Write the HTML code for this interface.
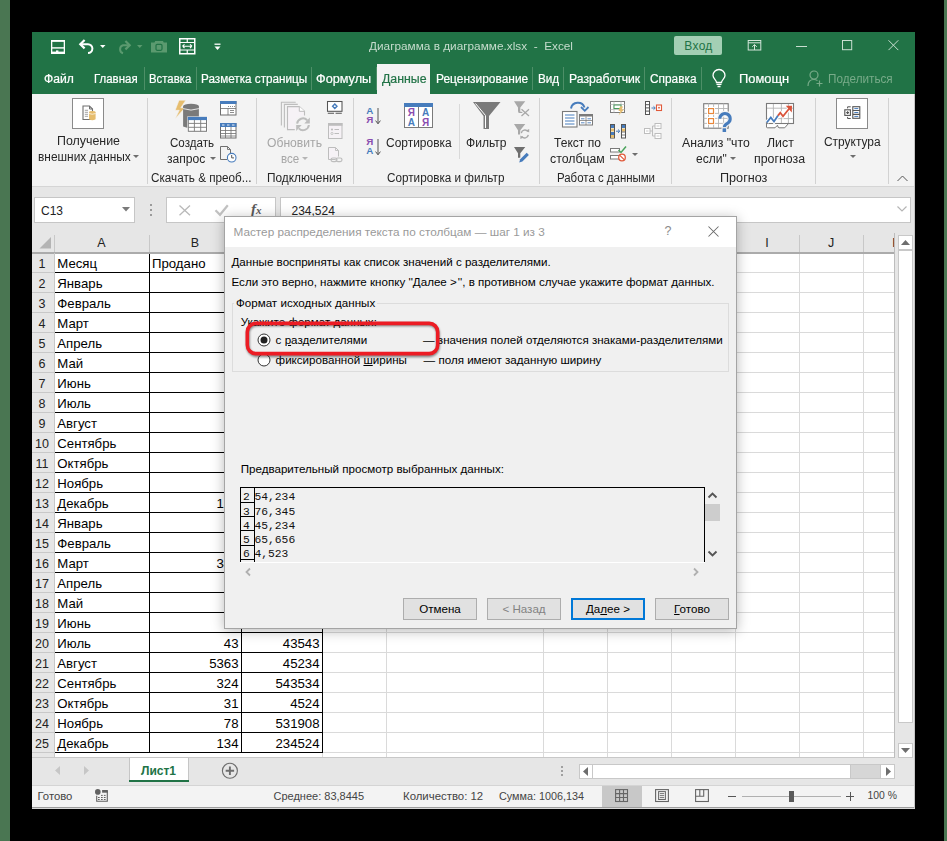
<!DOCTYPE html>
<html><head><meta charset="utf-8"><style>
html,body{margin:0;padding:0;background:#000;}
#root{position:relative;width:947px;height:841px;overflow:hidden;background:#000;font-family:"Liberation Sans", sans-serif;}
#root div{position:absolute;}
#root svg{position:absolute;overflow:visible;}
.t{white-space:nowrap;line-height:1;}
</style></head><body><div id="root">
<div style="left:0px;top:0px;width:10px;height:841px;background:#4a7652"></div><div style="left:944px;top:0px;width:3px;height:841px;background:#4a7652"></div><div style="left:32px;top:32px;width:883px;height:777px;background:#e6e6e6"></div><div style="left:32px;top:32px;width:883px;height:62px;background:#217346"></div><div style="left:32px;top:94px;width:883px;height:92px;background:#f3f3f3"></div><div style="left:32px;top:186px;width:883px;height:1px;background:#d5d5d5"></div><svg style="left:51px;top:40px" width="15" height="15" viewBox="0 0 15 15"><rect x="0.65" y="0.65" width="12.7" height="12.7" fill="none" stroke="#fff" stroke-width="1.3"/><rect x="0" y="0" width="14" height="1.8" fill="#fff"/><rect x="0.5" y="7.2" width="13" height="1.4" fill="#fff"/><rect x="0.5" y="11.6" width="13" height="1.9" fill="#fff"/><rect x="5" y="10.4" width="2.4" height="3" fill="#fff"/></svg><svg style="left:78px;top:38px" width="18" height="17" viewBox="0 0 18 17"><path d="M2.5 6.2H10A4.4 4.4 0 0 1 10 15" fill="none" stroke="#fff" stroke-width="2"/><path d="M6.6 2L2.3 6.2L6.6 10.4" fill="none" stroke="#fff" stroke-width="2.2"/></svg><svg style="left:99.5px;top:45px" width="6" height="4" viewBox="0 0 6 4"><path d="M0 0H5.5L2.75 3Z" fill="#fff"/></svg><svg style="left:115px;top:38px" width="18" height="17" viewBox="0 0 18 17"><path d="M14.5 7.2H8A4.2 4.2 0 0 0 8 15.2" fill="none" stroke="#5b9a6f" stroke-width="2"/><path d="M10.4 3L14.7 7.2L10.4 11.4" fill="none" stroke="#5b9a6f" stroke-width="2.2"/></svg><svg style="left:136.5px;top:45px" width="6" height="4" viewBox="0 0 6 4"><path d="M0 0H5.5L2.75 3Z" fill="#5b9a6f"/></svg><svg style="left:151px;top:41px" width="17" height="12" viewBox="0 0 17 12"><path d="M0 1.5H3.5L4.2 0H12L12.7 1.5H16V11.5H0Z" fill="#5b9a6f"/><rect x="5" y="3.3" width="6" height="6" rx="1.2" fill="none" stroke="#217346" stroke-width="1.2"/></svg><svg style="left:179px;top:38px" width="17" height="17" viewBox="0 0 17 17"><rect x="0.75" y="0.75" width="15" height="15" fill="none" stroke="#fff" stroke-width="1.5"/><path d="M1 4.5H16M1 12H16M8.25 1V4.5M8.25 12V16" stroke="#fff" stroke-width="1.2"/><path d="M3.5 8.2H13M3.5 8.2L5.5 6.4M3.5 8.2L5.5 10M13 8.2L11 6.4M13 8.2L11 10" stroke="#fff" stroke-width="1.1" fill="none"/></svg><svg style="left:213.5px;top:43px" width="7" height="8" viewBox="0 0 7 8"><path d="M0.5 1.2H6.5" stroke="#fff" stroke-width="1.3"/><path d="M0.5 3.5H6.5L3.5 7Z" fill="#fff"/></svg><div class="t" style="top:41.01px;font-size:11.8px;color:#c6dccd;transform:scaleX(1.0005);transform-origin:0 0;left:369px;">Диаграмма в диаграмме.xlsx&nbsp; - &nbsp;Excel</div><div style="left:674px;top:36px;width:48px;height:19px;background:#a3cfb4;border-radius:2px"></div><div class="t" style="top:39.64px;font-size:12px;color:#217346;left:498.5px;width:400px;text-align:center;letter-spacing:0.3px">Вход</div><svg style="left:745px;top:38px" width="18" height="14" viewBox="745 38 18 14"><rect x="748.2" y="40.5" width="12.6" height="9.5" fill="none" stroke="#d3e6da" stroke-width="1"/><path d="M748.2 42.8H760.8M754.5 44.6V50M752.2 46.9L754.5 44.6L756.8 46.9" fill="none" stroke="#d3e6da" stroke-width="1"/></svg><div style="left:796px;top:46px;width:11px;height:1px;background:#c9ded0"></div><svg style="left:840px;top:38px" width="14" height="14" viewBox="840 38 14 14"><rect x="842.5" y="40.5" width="9.2" height="9.2" fill="none" stroke="#c9ded0" stroke-width="1"/></svg><svg style="left:886px;top:38px" width="14" height="14" viewBox="886 38 14 14"><path d="M888.5 40.3L898.3 50.1M898.3 40.3L888.5 50.1" stroke="#c9ded0" stroke-width="1"/></svg><div style="left:377px;top:64px;width:53px;height:30px;background:#f3f3f3"></div><div class="t" style="top:73.04px;font-size:12px;color:#fff;transform:scaleX(1.0096);transform-origin:0 0;left:43.5px;-webkit-text-stroke:0.2px #fff">Файл</div><div class="t" style="top:73.04px;font-size:12px;color:#fff;transform:scaleX(0.9543);transform-origin:0 0;left:94px;-webkit-text-stroke:0.2px #fff">Главная</div><div class="t" style="top:73.04px;font-size:12px;color:#fff;transform:scaleX(0.9460);transform-origin:0 0;left:149.2px;-webkit-text-stroke:0.2px #fff">Вставка</div><div class="t" style="top:73.04px;font-size:12px;color:#fff;transform:scaleX(0.9754);transform-origin:0 0;left:201px;-webkit-text-stroke:0.2px #fff">Разметка страницы</div><div class="t" style="top:73.04px;font-size:12px;color:#fff;transform:scaleX(1.0571);transform-origin:0 0;left:316.4px;-webkit-text-stroke:0.2px #fff">Формулы</div><div class="t" style="top:73.04px;font-size:12px;color:#217346;transform:scaleX(1.0286);transform-origin:0 0;left:381.5px;-webkit-text-stroke:0.2px #217346">Данные</div><div class="t" style="top:73.04px;font-size:12px;color:#fff;transform:scaleX(0.9949);transform-origin:0 0;left:435.5px;-webkit-text-stroke:0.2px #fff">Рецензирование</div><div class="t" style="top:73.04px;font-size:12px;color:#fff;transform:scaleX(0.9761);transform-origin:0 0;left:537.5px;-webkit-text-stroke:0.2px #fff">Вид</div><div class="t" style="top:73.04px;font-size:12px;color:#fff;transform:scaleX(1.0174);transform-origin:0 0;left:568.5px;-webkit-text-stroke:0.2px #fff">Разработчик</div><div class="t" style="top:73.04px;font-size:12px;color:#fff;transform:scaleX(0.9877);transform-origin:0 0;left:650px;-webkit-text-stroke:0.2px #fff">Справка</div><div style="left:144px;top:67px;width:1px;height:23px;background:#4d8f67"></div><div style="left:196px;top:67px;width:1px;height:23px;background:#4d8f67"></div><div style="left:311px;top:67px;width:1px;height:23px;background:#4d8f67"></div><div style="left:376px;top:67px;width:1px;height:23px;background:#4d8f67"></div><div style="left:532px;top:67px;width:1px;height:23px;background:#4d8f67"></div><div style="left:563px;top:67px;width:1px;height:23px;background:#4d8f67"></div><div style="left:644px;top:67px;width:1px;height:23px;background:#4d8f67"></div><div style="left:701px;top:67px;width:1px;height:23px;background:#4d8f67"></div><svg style="left:712px;top:70px" width="14" height="18" viewBox="0 0 14 18"><path d="M4.5 12.5C4.5 10 1 8.5 1 5.5A6 6 0 0 1 13 5.5C13 8.5 9.5 10 9.5 12.5Z" fill="none" stroke="#fff" stroke-width="1.3"/><path d="M4.5 14.3H9.5M5.5 16.5H8.5" stroke="#fff" stroke-width="1.3"/></svg><div class="t" style="top:72.62px;font-size:12.5px;color:#fff;transform:scaleX(1.0314);transform-origin:0 0;left:738.5px;-webkit-text-stroke:0.2px #fff">Помощн</div><svg style="left:807px;top:70px" width="16" height="17" viewBox="0 0 16 17"><circle cx="7" cy="5" r="4" fill="none" stroke="#78ab89" stroke-width="1.2"/><path d="M1 16C1 11.5 3.5 9.5 7 9.5C8.5 9.5 9.5 10 10.5 10.5" fill="none" stroke="#78ab89" stroke-width="1.2"/><path d="M12.5 10.5V16.5M9.5 13.5H15.5" stroke="#78ab89" stroke-width="1.2"/></svg><div class="t" style="top:73.04px;font-size:12px;color:#78ab89;transform:scaleX(0.9764);transform-origin:0 0;left:827.5px;">Поделиться</div><div style="left:147px;top:98px;width:1px;height:86px;background:#d2d2d2"></div><div style="left:256px;top:98px;width:1px;height:86px;background:#d2d2d2"></div><div style="left:353px;top:98px;width:1px;height:86px;background:#d2d2d2"></div><div style="left:539px;top:98px;width:1px;height:86px;background:#d2d2d2"></div><div style="left:671px;top:98px;width:1px;height:86px;background:#d2d2d2"></div><div style="left:815px;top:98px;width:1px;height:86px;background:#d2d2d2"></div><div style="left:888px;top:98px;width:1px;height:86px;background:#d2d2d2"></div><div style="left:459px;top:104px;width:1px;height:55px;background:#d9d9d9"></div><div style="left:72px;top:98px;width:32px;height:31px;background:#fff;border:1px solid #8a8a8a;box-sizing:border-box"></div><svg style="left:82px;top:105px" width="16" height="16" viewBox="0 0 16 16"><path d="M1 1H7.5L10.5 4V14.5H1Z" fill="#fff" stroke="#6f6f6f" stroke-width="1.1"/><path d="M7.5 1V4H10.5" fill="none" stroke="#6f6f6f" stroke-width="1"/><path d="M2.8 5.3H6M2.8 7.3H6M2.8 9.3H6M2.8 11.3H6" stroke="#8a8a8a" stroke-width="0.8"/><path d="M7 7.2V14.3Q10.3 16.2 13.6 14.3V7.2Z" fill="#e6bd6e"/><ellipse cx="10.3" cy="7.2" rx="3.3" ry="1.3" fill="#e6bd6e"/><path d="M7 8.5Q10.3 10 13.6 8.5" stroke="#fff" stroke-width="0.7" fill="none"/></svg><div class="t" style="top:134.84px;font-size:12px;color:#262626;transform:scaleX(1.0333);transform-origin:0 0;left:57px;">Получение</div><div class="t" style="top:150.84px;font-size:12px;color:#262626;transform:scaleX(0.9922);transform-origin:0 0;left:37.5px;">внешних данных</div><svg style="left:133px;top:155px" width="6" height="4" viewBox="0 0 6 4"><path d="M0 0H6L3 3Z" fill="#6d6d6d"/></svg><div class="t" style="top:171.84px;font-size:12px;color:#262626;transform:scaleX(0.9750);transform-origin:0 0;left:150.5px;">Скачать &amp; преоб...</div><svg style="left:174px;top:99px" width="34" height="34" viewBox="0 0 34 34"><path d="M5 1.2L11.8 1.2L6.8 8.8L11 8.8L1.2 19.7L5.3 11.3L1.2 11.3Z" fill="#e6bd6e" stroke="#f3f3f3" stroke-width="0.6"/><path d="M9.1 7.2V27.5Q17 30.5 24.9 27.5V7.2Z" fill="#7a7a7a"/><ellipse cx="17" cy="7.2" rx="7.9" ry="2.5" fill="#7a7a7a"/><path d="M9.1 9.6Q17 12.6 24.9 9.6" stroke="#f3f3f3" stroke-width="0.9" fill="none"/><rect x="13.3" y="17.4" width="20.2" height="15.9" fill="#fff"/><rect x="14.3" y="18.4" width="18.2" height="13.9" fill="#fff" stroke="#7a7a7a" stroke-width="1"/><rect x="13.8" y="17.9" width="19.2" height="3.2" fill="#477cbc"/><path d="M14.3 24.4H32.5M14.3 28.3H32.5M20.4 21V32.3M26.7 21V32.3" stroke="#7a7a7a" stroke-width="0.9"/></svg><div class="t" style="top:137.14px;font-size:12px;color:#262626;transform:scaleX(0.9647);transform-origin:0 0;left:169.5px;">Создать</div><div class="t" style="top:153.14px;font-size:12px;color:#262626;transform:scaleX(1.0097);transform-origin:0 0;left:167.3px;">запрос</div><svg style="left:209.5px;top:157.2px" width="6" height="4" viewBox="0 0 6 4"><path d="M0 0H6L3 3Z" fill="#6d6d6d"/></svg><svg style="left:220px;top:101px" width="17" height="15" viewBox="0 0 17 15"><rect x="0.5" y="0.5" width="15.5" height="13.5" fill="#fff" stroke="#6f6f6f"/><rect x="0" y="0" width="16.5" height="3" fill="#477cbc"/><path d="M0.5 7.5H16M8 7.5V14M10 9.5H14M10 11.5H14M8 5.5H9M10 5.5H11M12 5.5H13M14 5.5H15" stroke="#6f6f6f" stroke-width="0.8"/></svg><svg style="left:220px;top:123px" width="17" height="16" viewBox="0 0 17 16"><rect x="0.5" y="0.5" width="15.5" height="14.5" fill="#fff" stroke="#6f6f6f"/><rect x="0" y="0" width="16.5" height="4" fill="#477cbc"/><path d="M2 2H4.5M7 2H9.5M12 2H14.5" stroke="#fff" stroke-width="0.9"/><path d="M0.5 7.5H16M0.5 10.5H16M0.5 13H16M5.5 4V15M11 4V15" stroke="#6f6f6f" stroke-width="0.8"/></svg><svg style="left:220px;top:146px" width="17" height="17" viewBox="0 0 17 17"><path d="M0.5 0.5H7.5L10.5 3.5V9M7 13.5H0.5V0.5" fill="none" stroke="#6f6f6f" stroke-width="1"/><path d="M7.5 0.5V3.5H10.5" fill="none" stroke="#6f6f6f" stroke-width="0.9"/><circle cx="11.7" cy="11.7" r="4.3" fill="#fff" stroke="#477cbc" stroke-width="1.1"/><path d="M11.7 9V11.9H14" stroke="#444" stroke-width="0.9" fill="none"/></svg><svg style="left:276px;top:98px" width="40" height="36" viewBox="0 0 40 36"><path d="M5.4 27.6V4.3H19.7" stroke="#bdbdbd" stroke-width="1.1" fill="none"/><path d="M8.4 29.5V6.4H21.8" stroke="#bdbdbd" stroke-width="1.1" fill="none"/><path d="M20 31.6H11.5V8.6H23.3L28.5 13.3V20H20Z" fill="#f6f2f6"/><path d="M18.8 31.6H11.5V8.6H23.3L28.5 13.3V17.6" stroke="#bdbdbd" stroke-width="1.1" fill="none"/><path d="M23.3 8.6V13.3H28.5" stroke="#bdbdbd" stroke-width="1" fill="#fff"/><circle cx="27" cy="26.3" r="8.2" fill="#f3f3f3"/><path d="M21.1 25.6A5.9 5.9 0 0 1 31.2 22.2" stroke="#bdbdbd" stroke-width="2" fill="none"/><path d="M28.3 25.6H33.8V19.6Z" fill="#bdbdbd"/><path d="M32.9 27A5.9 5.9 0 0 1 22.8 30.4" stroke="#bdbdbd" stroke-width="2" fill="none"/><path d="M25.7 27H20.2V33Z" fill="#bdbdbd"/></svg><div class="t" style="top:137.14px;font-size:12px;color:#a6a6a6;transform:scaleX(1.0121);transform-origin:0 0;left:266.5px;">Обновить</div><div class="t" style="top:153.14px;font-size:12px;color:#a6a6a6;transform:scaleX(0.9618);transform-origin:0 0;left:281.3px;">все</div><svg style="left:302px;top:157.2px" width="6" height="4" viewBox="0 0 6 4"><path d="M0 0H6L3 3Z" fill="#b5b5b5"/></svg><svg style="left:325px;top:99px" width="20" height="17" viewBox="325 99 20 17"><rect x="327.5" y="101.5" width="14.5" height="9.8" fill="#fff" stroke="#555" stroke-width="1.05"/><path d="M327.8 113.2H334M335.6 113.2H341.8" stroke="#555" stroke-width="1.05"/><path d="M334.8 104L337 106.3L334.8 108.6L332.6 106.3Z" fill="none" stroke="#477cbc" stroke-width="1.4"/></svg><svg style="left:328px;top:123px" width="15" height="17" viewBox="0 0 15 17"><rect x="0.5" y="0.5" width="13.5" height="15" fill="#f6f2f6" stroke="#bdbdbd"/><rect x="0" y="0" width="14.5" height="2.8" fill="#bdbdbd"/><circle cx="4" cy="6.5" r="1.1" fill="#bdbdbd"/><circle cx="4" cy="10.5" r="1.1" fill="none" stroke="#bdbdbd" stroke-width="0.8"/><path d="M6.5 6.5H11M6.5 10.5H11" stroke="#bdbdbd" stroke-width="1"/></svg><svg style="left:328px;top:147px" width="16" height="16" viewBox="0 0 16 16"><path d="M7.5 12.5H0.5V0.5H7.5L10.5 3.5V9.5" fill="#f6f2f6" stroke="#bdbdbd" stroke-width="1"/><path d="M7.5 0.5V3.5H10.5" fill="none" stroke="#bdbdbd" stroke-width="0.9"/><rect x="3" y="11" width="6" height="3.6" rx="1.8" fill="none" stroke="#bdbdbd" stroke-width="1.2"/><rect x="8" y="11" width="6" height="3.6" rx="1.8" fill="none" stroke="#bdbdbd" stroke-width="1.2"/></svg><div class="t" style="top:171.84px;font-size:12px;color:#262626;transform:scaleX(0.9879);transform-origin:0 0;left:266.5px;">Подключения</div><div class="t" style="top:106.30px;font-size:9.8px;color:#477cbc;left:366.3px;font-weight:bold">A</div><div class="t" style="top:114.60px;font-size:9.8px;color:#8a4db0;left:366.3px;font-weight:bold">Я</div><svg style="left:375px;top:107.5px" width="6" height="17" viewBox="0 0 6 17"><path d="M3 0V15.5M0.6 12.6L3 15.8L5.4 12.6" stroke="#555" stroke-width="1" fill="none"/></svg><div class="t" style="top:137.10px;font-size:9.8px;color:#8a4db0;left:366.3px;font-weight:bold">Я</div><div class="t" style="top:145.60px;font-size:9.8px;color:#477cbc;left:366.3px;font-weight:bold">A</div><svg style="left:375px;top:138.5px" width="6" height="17" viewBox="0 0 6 17"><path d="M3 0V15.5M0.6 12.6L3 15.8L5.4 12.6" stroke="#555" stroke-width="1" fill="none"/></svg><svg style="left:404px;top:103px" width="30" height="26" viewBox="0 0 30 26"><rect x="0.5" y="0.5" width="28" height="24" fill="#fff" stroke="#7a7a7a"/><rect x="0" y="0" width="29" height="4" fill="#477cbc"/><path d="M14.5 4V24.5" stroke="#7a7a7a"/><text x="7.3" y="13.2" font-size="10" font-weight="bold" fill="#8a4db0" text-anchor="middle" font-family="Liberation Sans">Я</text><text x="7.3" y="23" font-size="10" font-weight="bold" fill="#477cbc" text-anchor="middle" font-family="Liberation Sans">A</text><text x="21.7" y="13.2" font-size="10" font-weight="bold" fill="#477cbc" text-anchor="middle" font-family="Liberation Sans">A</text><text x="21.7" y="23" font-size="10" font-weight="bold" fill="#8a4db0" text-anchor="middle" font-family="Liberation Sans">Я</text></svg><div class="t" style="top:137.14px;font-size:12px;color:#262626;transform:scaleX(0.9976);transform-origin:0 0;left:386.3px;">Сортировка</div><svg style="left:472px;top:101px" width="30" height="29" viewBox="0 0 30 29"><path d="M1 1H28.5L17 15V28H11.5V15Z" fill="#7a7a7a"/><path d="M3.5 2.5L13.5 14.5V27" stroke="#fff" stroke-width="1" fill="none"/></svg><div class="t" style="top:137.14px;font-size:12px;color:#262626;transform:scaleX(1.0047);transform-origin:0 0;left:466px;">Фильтр</div><svg style="left:510px;top:98px" width="24" height="68" viewBox="510 98 24 68"><path d="M514 101.3H525.3L520.3 107.5V111.8H518V107.5Z" fill="#a8a8a8"/><path d="M519.1 110.5V112.3H522.5" stroke="#a8a8a8" stroke-width="1.2" fill="none"/><path d="M521.5 109.3L529 116M529 109.3L521.5 116" stroke="#f3f3f3" stroke-width="3"/><path d="M521.5 109.3L529 116M529 109.3L521.5 116" stroke="#a8a8a8" stroke-width="1.3"/><path d="M514 124H525.3L520.3 130.2V134.5H518V130.2Z" fill="#a8a8a8"/><circle cx="524.8" cy="134" r="4.5" fill="#f3f3f3"/><path d="M521.3 133.2A3.6 3.6 0 0 1 527.8 131.6M528.3 134.8A3.6 3.6 0 0 1 521.8 136.4" stroke="#a8a8a8" stroke-width="1.4" fill="none"/><path d="M526 130.4L529.2 132.6L529.2 129Z" fill="#a8a8a8"/><path d="M523.6 137.6L520.4 135.4V139Z" fill="#a8a8a8"/><path d="M514 147H525.3L520.3 153.2V157.7H518V153.2Z" fill="#6f6f6f"/><path d="M519.2 162.4L520.2 159.2L526.7 152.7L528.9 154.9L522.4 161.4Z" fill="#f3f3f3" stroke="#f3f3f3" stroke-width="1.5"/><path d="M519.2 162.4L520.2 159.2L526.7 152.7L528.9 154.9L522.4 161.4Z" fill="#477cbc"/></svg><div class="t" style="top:171.84px;font-size:12px;color:#262626;transform:scaleX(0.9759);transform-origin:0 0;left:387.1px;">Сортировка и фильтр</div><svg style="left:561px;top:101px" width="33" height="27" viewBox="0 0 33 27"><path d="M10 7.5A7 7 0 0 1 23.5 6.5" stroke="#477cbc" stroke-width="2" fill="none"/><path d="M20 6L23.8 9.8L27.5 6" stroke="#477cbc" stroke-width="1.8" fill="none"/><rect x="1.5" y="10.5" width="14.5" height="15.5" fill="#fff" stroke="#7a7a7a" stroke-width="1.1"/><path d="M4 14H13.5M4 17H13.5M4 20H13.5M4 23H13.5" stroke="#477cbc" stroke-width="1"/><rect x="18.5" y="13.5" width="13" height="10.5" fill="#fff" stroke="#7a7a7a" stroke-width="1"/><rect x="18" y="13" width="14" height="2.5" fill="#7a7a7a"/><path d="M18.5 19.5H31.5M25 15.5V24" stroke="#7a7a7a" stroke-width="0.8"/><path d="M20 17.8H23.5M26.5 17.8H30M20 21.8H23.5M26.5 21.8H30" stroke="#477cbc" stroke-width="0.9"/></svg><div class="t" style="top:137.14px;font-size:12px;color:#262626;transform:scaleX(1.0060);transform-origin:0 0;left:553.5px;">Текст по</div><div class="t" style="top:153.14px;font-size:12px;color:#262626;transform:scaleX(1.0252);transform-origin:0 0;left:549.5px;">столбцам</div><svg style="left:610px;top:101px" width="17" height="15" viewBox="0 0 17 15"><rect x="0.5" y="0.5" width="14" height="11" fill="#fff" stroke="#7a7a7a"/><path d="M0.5 3.5H14.5M0.5 8.5H14.5M4 0.5V11.5M11 0.5V11.5" stroke="#bbb" stroke-width="0.8"/><rect x="4" y="4" width="7" height="3.5" fill="#fff" stroke="#4a9a5e" stroke-width="1"/><path d="M13 5.5H10L8.5 10H10.5L8.5 14.5L14 8.5H11.8Z" fill="#e6bd6e"/></svg><svg style="left:610px;top:124px" width="16" height="15" viewBox="0 0 16 15"><rect x="0.5" y="0.5" width="4" height="13.5" fill="#fff" stroke="#555" stroke-width="1"/><rect x="1" y="1" width="3" height="3" fill="#477cbc"/><rect x="1" y="4.5" width="3" height="3" fill="#e6bd6e"/><rect x="1" y="8" width="3" height="3" fill="#477cbc"/><rect x="1" y="11" width="3" height="2.8" fill="#e6bd6e"/><rect x="11.5" y="0.5" width="4" height="13.5" fill="#fff" stroke="#555" stroke-width="1"/><rect x="12" y="1" width="3" height="3" fill="#477cbc"/><rect x="12" y="4.5" width="3" height="3" fill="#e6bd6e"/><path d="M12 8H15M12 11H15" stroke="#555" stroke-width="0.8"/><path d="M6 7.2H9.5M8 5.5L9.8 7.2L8 9" stroke="#477cbc" stroke-width="1" fill="none"/></svg><svg style="left:610px;top:146px" width="17" height="16" viewBox="0 0 17 16"><rect x="0.5" y="2.5" width="9" height="3.5" fill="#fff" stroke="#7a7a7a" stroke-width="1"/><rect x="0.5" y="9.5" width="9" height="3.5" fill="#fff" stroke="#7a7a7a" stroke-width="1"/><path d="M8.5 4L11 6.5L16 0.5" stroke="#4aa35c" stroke-width="1.5" fill="none"/><circle cx="12" cy="11.5" r="3.3" fill="#fff" stroke="#e0593a" stroke-width="1.3"/><path d="M9.8 9.3L14.2 13.7" stroke="#e0593a" stroke-width="1.2"/></svg><svg style="left:632px;top:153.3px" width="6" height="4" viewBox="0 0 6 4"><path d="M0 0H6L3 3Z" fill="#6d6d6d"/></svg><svg style="left:645px;top:101px" width="17" height="14" viewBox="0 0 17 14"><rect x="0.5" y="0.5" width="4" height="13" fill="#fff" stroke="#555" stroke-width="1"/><path d="M0.5 3.7H4.5M0.5 6.9H4.5M0.5 10.1H4.5" stroke="#555" stroke-width="1"/><path d="M6.5 7H10M8.5 5.3L10.3 7L8.5 8.7" stroke="#477cbc" stroke-width="1" fill="none"/><rect x="11.5" y="4" width="5" height="5.5" fill="#fff" stroke="#e0593a" stroke-width="1.1"/><rect x="13.2" y="5.9" width="1.6" height="1.6" fill="#e0593a"/></svg><svg style="left:644px;top:123px" width="18" height="17" viewBox="0 0 18 17"><rect x="0.5" y="5.5" width="5.5" height="5" fill="#fff" stroke="#bdbdbd"/><rect x="11" y="0.5" width="6" height="5" fill="#fff" stroke="#bdbdbd"/><rect x="11" y="10.5" width="6" height="5" fill="#fff" stroke="#bdbdbd"/><path d="M6 8H8.5M8.5 3H11M8.5 3V13H11" stroke="#bdbdbd" fill="none"/><path d="M2 8H4.5M12.5 3H15.5M12.5 13H15.5" stroke="#bdbdbd" stroke-width="0.8"/></svg><div class="t" style="top:171.84px;font-size:12px;color:#262626;transform:scaleX(0.9535);transform-origin:0 0;left:556.5px;">Работа с данными</div><svg style="left:700px;top:100px" width="36" height="34" viewBox="700 100 36 34"><rect x="703.7" y="103.7" width="24.5" height="24.5" fill="#fff" stroke="#7a7a7a" stroke-width="1.1"/><path d="M703.5 108.5H728M703.5 113.4H728M703.5 118.4H728M703.5 123.4H728M708.5 103.5V128M713.6 103.5V128M718.5 103.5V128M723.6 103.5V128" stroke="#b4b4b4" stroke-width="0.9"/><rect x="707" y="107" width="8" height="7.8" fill="#fff"/><rect x="707" y="117" width="8" height="7.8" fill="#fff"/><rect x="708.6" y="108.6" width="4.9" height="4.9" fill="none" stroke="#e8873a" stroke-width="1.2"/><rect x="708.6" y="118.6" width="4.9" height="4.9" fill="none" stroke="#e8873a" stroke-width="1.2"/><path d="M719.8 118.8A5.2 5.2 0 1 1 728.2 122.8Q724.4 124.6 724.4 127" stroke="#f3f3f3" stroke-width="5.5" fill="none"/><rect x="721.5" y="127.3" width="5.5" height="5.7" fill="#f3f3f3"/><path d="M719.8 118.8A5.2 5.2 0 1 1 728.2 122.8Q724.4 124.6 724.4 127" stroke="#477cbc" stroke-width="3.1" fill="none"/><rect x="722.6" y="128.3" width="3.5" height="3.7" fill="#477cbc"/></svg><div class="t" style="top:137.14px;font-size:12px;color:#262626;transform:scaleX(1.0195);transform-origin:0 0;left:681.5px;">Анализ "что</div><div class="t" style="top:153.14px;font-size:12px;color:#262626;transform:scaleX(1.0019);transform-origin:0 0;left:696px;">если"</div><svg style="left:730.3px;top:157.2px" width="6" height="4" viewBox="0 0 6 4"><path d="M0 0H6L3 3Z" fill="#6d6d6d"/></svg><svg style="left:762px;top:100px" width="36" height="32" viewBox="762 100 36 32"><path d="M766.5 123.5V127Q766.5 127.8 767.5 127.8H775L777.5 125.2Q778 127.8 779 127.8H784.7L788.5 123.5" fill="#fff" stroke="#7a7a7a" stroke-width="1"/><rect x="766.5" y="103.5" width="27" height="20" fill="#fff" stroke="#7a7a7a" stroke-width="1.1"/><path d="M767 108.2H793M767 118.6H793M773.4 104V123M781.4 104V123M788.4 104V123" stroke="#b4b4b4" stroke-width="0.9"/><path d="M766.8 122.5L770.8 117.5L774 121.5L778 115.6L780.3 112.8L783 116.2L790.5 107" stroke="#fff" stroke-width="3.8" fill="none"/><path d="M766.8 122.5L770.8 117.5L774 121.5L778 115.6" stroke="#477cbc" stroke-width="1.8" fill="none" stroke-linejoin="miter"/><path d="M778 115.6L780.3 112.8L783 116.2L790.5 107" stroke="#d9533a" stroke-width="1.8" fill="none"/><path d="M785.8 105.8L792 105.8L791.8 112.5Z" fill="#d9533a"/></svg><div class="t" style="top:137.14px;font-size:12px;color:#262626;transform:scaleX(1.0277);transform-origin:0 0;left:766.5px;">Лист</div><div class="t" style="top:153.14px;font-size:12px;color:#262626;transform:scaleX(1.0307);transform-origin:0 0;left:754px;">прогноза</div><div class="t" style="top:171.84px;font-size:12px;color:#262626;transform:scaleX(1.0526);transform-origin:0 0;left:719.5px;">Прогноз</div><div style="left:836px;top:98px;width:32px;height:31px;background:#fff;border:1px solid #8a8a8a;box-sizing:border-box"></div><svg style="left:840px;top:103px" width="24" height="19" viewBox="840 103 24 19"><rect x="844.8" y="109.8" width="5.6" height="5.6" fill="#fff" stroke="#555" stroke-width="1.1"/><path d="M847.6 111.3V114M846.2 112.6H849" stroke="#555" stroke-width="1.2"/><path d="M847.6 108.4V106.8H850.7M847.6 116.9V118.5H850.7" stroke="#555" stroke-width="1" fill="none"/><rect x="852.8" y="106.7" width="7" height="11.6" fill="#fff" stroke="#555" stroke-width="1.1"/><path d="M852.8 110.5H859.8M852.8 114.4H859.8" stroke="#555" stroke-width="1.1"/><path d="M854.3 108.6H858.3M854.3 112.5H858.3M854.3 116.4H858.3" stroke="#477cbc" stroke-width="1"/></svg><div class="t" style="top:136.34px;font-size:12px;color:#262626;transform:scaleX(0.9941);transform-origin:0 0;left:824px;">Структура</div><svg style="left:849.5px;top:155px" width="6" height="4" viewBox="0 0 6 4"><path d="M0 0H6L3 3Z" fill="#6d6d6d"/></svg><svg style="left:897px;top:175px" width="11" height="7" viewBox="0 0 11 7"><path d="M0.5 6L5.5 1L10.5 6" stroke="#555" stroke-width="1" fill="none"/></svg><div style="left:34px;top:197px;width:101px;height:26px;background:#fff;border:1px solid #c6c6c6;box-sizing:border-box"></div><div class="t" style="top:204.84px;font-size:12px;color:#222;left:41px;">C13</div><svg style="left:122px;top:207px" width="8" height="5" viewBox="0 0 8 5"><path d="M0 0H8L4 4.5Z" fill="#7a7a7a"/></svg><div style="left:150px;top:204px;width:2px;height:2px;background:#9a9a9a"></div><div style="left:150px;top:209px;width:2px;height:2px;background:#9a9a9a"></div><div style="left:150px;top:214px;width:2px;height:2px;background:#9a9a9a"></div><div style="left:166px;top:197px;width:110px;height:26px;background:#fff;border:1px solid #c6c6c6;box-sizing:border-box"></div><svg style="left:0;top:0" width="947" height="841" viewBox="0 0 947 841"><path d="M179.5 205.5L190 215.3M190 205.5L179.5 215.3" stroke="#b9b9b9" stroke-width="1.3"/><path d="M215.5 210.2L220 214.8L227.8 205.3" stroke="#c2c2c2" stroke-width="2.2" fill="none"/></svg><div class="t" style="left:251px;top:201.5px;font-family:'Liberation Serif',serif;font-style:italic;font-weight:bold;font-size:15px;color:#5a5a5a;line-height:15px">f<span style="font-size:11px">x</span></div><div style="left:280px;top:197px;width:631px;height:26px;background:#fff;border:1px solid #c6c6c6;box-sizing:border-box"></div><div class="t" style="top:205.34px;font-size:12px;color:#222;left:291.5px;">234,524</div><svg style="left:897px;top:206px" width="10" height="6" viewBox="0 0 10 6"><path d="M0.5 0.5L5 5L9.5 0.5" stroke="#b5b5b5" stroke-width="1.2" fill="none"/></svg><div style="left:32px;top:233px;width:862px;height:19px;background:#e6e6e6"></div><div style="left:55px;top:253px;width:839px;height:504px;background:#fff"></div><div style="left:32px;top:253px;width:22px;height:504px;background:#e6e6e6"></div><svg style="left:39px;top:237px" width="13" height="12" viewBox="0 0 13 12"><path d="M12 0V11.5H0.5Z" fill="#b4b4b4"/></svg><div style="left:54px;top:235px;width:1px;height:17px;background:#c8c8c8"></div><div style="left:149px;top:235px;width:1px;height:17px;background:#c8c8c8"></div><div style="left:241px;top:235px;width:1px;height:17px;background:#c8c8c8"></div><div style="left:322px;top:235px;width:1px;height:17px;background:#c8c8c8"></div><div style="left:386px;top:235px;width:1px;height:17px;background:#c8c8c8"></div><div style="left:543px;top:235px;width:1px;height:17px;background:#c8c8c8"></div><div style="left:607px;top:235px;width:1px;height:17px;background:#c8c8c8"></div><div style="left:671px;top:235px;width:1px;height:17px;background:#c8c8c8"></div><div style="left:735px;top:235px;width:1px;height:17px;background:#c8c8c8"></div><div style="left:799px;top:235px;width:1px;height:17px;background:#c8c8c8"></div><div style="left:863px;top:235px;width:1px;height:17px;background:#c8c8c8"></div><div style="left:32px;top:252px;width:862px;height:2px;background:#ababab"></div><div style="left:322px;top:254px;width:1px;height:503px;background:#dadada"></div><div style="left:386px;top:254px;width:1px;height:503px;background:#dadada"></div><div style="left:543px;top:254px;width:1px;height:503px;background:#dadada"></div><div style="left:607px;top:254px;width:1px;height:503px;background:#dadada"></div><div style="left:671px;top:254px;width:1px;height:503px;background:#dadada"></div><div style="left:735px;top:254px;width:1px;height:503px;background:#dadada"></div><div style="left:799px;top:254px;width:1px;height:503px;background:#dadada"></div><div style="left:863px;top:254px;width:1px;height:503px;background:#dadada"></div><div style="left:55px;top:272px;width:839px;height:1px;background:#dadada"></div><div style="left:32px;top:272px;width:22px;height:1px;background:#c8c8c8"></div><div style="left:55px;top:292px;width:839px;height:1px;background:#dadada"></div><div style="left:32px;top:292px;width:22px;height:1px;background:#c8c8c8"></div><div style="left:55px;top:312px;width:839px;height:1px;background:#dadada"></div><div style="left:32px;top:312px;width:22px;height:1px;background:#c8c8c8"></div><div style="left:55px;top:332px;width:839px;height:1px;background:#dadada"></div><div style="left:32px;top:332px;width:22px;height:1px;background:#c8c8c8"></div><div style="left:55px;top:352px;width:839px;height:1px;background:#dadada"></div><div style="left:32px;top:352px;width:22px;height:1px;background:#c8c8c8"></div><div style="left:55px;top:372px;width:839px;height:1px;background:#dadada"></div><div style="left:32px;top:372px;width:22px;height:1px;background:#c8c8c8"></div><div style="left:55px;top:392px;width:839px;height:1px;background:#dadada"></div><div style="left:32px;top:392px;width:22px;height:1px;background:#c8c8c8"></div><div style="left:55px;top:412px;width:839px;height:1px;background:#dadada"></div><div style="left:32px;top:412px;width:22px;height:1px;background:#c8c8c8"></div><div style="left:55px;top:432px;width:839px;height:1px;background:#dadada"></div><div style="left:32px;top:432px;width:22px;height:1px;background:#c8c8c8"></div><div style="left:55px;top:452px;width:839px;height:1px;background:#dadada"></div><div style="left:32px;top:452px;width:22px;height:1px;background:#c8c8c8"></div><div style="left:55px;top:472px;width:839px;height:1px;background:#dadada"></div><div style="left:32px;top:472px;width:22px;height:1px;background:#c8c8c8"></div><div style="left:55px;top:492px;width:839px;height:1px;background:#dadada"></div><div style="left:32px;top:492px;width:22px;height:1px;background:#c8c8c8"></div><div style="left:55px;top:512px;width:839px;height:1px;background:#dadada"></div><div style="left:32px;top:512px;width:22px;height:1px;background:#c8c8c8"></div><div style="left:55px;top:532px;width:839px;height:1px;background:#dadada"></div><div style="left:32px;top:532px;width:22px;height:1px;background:#c8c8c8"></div><div style="left:55px;top:552px;width:839px;height:1px;background:#dadada"></div><div style="left:32px;top:552px;width:22px;height:1px;background:#c8c8c8"></div><div style="left:55px;top:572px;width:839px;height:1px;background:#dadada"></div><div style="left:32px;top:572px;width:22px;height:1px;background:#c8c8c8"></div><div style="left:55px;top:592px;width:839px;height:1px;background:#dadada"></div><div style="left:32px;top:592px;width:22px;height:1px;background:#c8c8c8"></div><div style="left:55px;top:612px;width:839px;height:1px;background:#dadada"></div><div style="left:32px;top:612px;width:22px;height:1px;background:#c8c8c8"></div><div style="left:55px;top:632px;width:839px;height:1px;background:#dadada"></div><div style="left:32px;top:632px;width:22px;height:1px;background:#c8c8c8"></div><div style="left:55px;top:652px;width:839px;height:1px;background:#dadada"></div><div style="left:32px;top:652px;width:22px;height:1px;background:#c8c8c8"></div><div style="left:55px;top:672px;width:839px;height:1px;background:#dadada"></div><div style="left:32px;top:672px;width:22px;height:1px;background:#c8c8c8"></div><div style="left:55px;top:692px;width:839px;height:1px;background:#dadada"></div><div style="left:32px;top:692px;width:22px;height:1px;background:#c8c8c8"></div><div style="left:55px;top:712px;width:839px;height:1px;background:#dadada"></div><div style="left:32px;top:712px;width:22px;height:1px;background:#c8c8c8"></div><div style="left:55px;top:732px;width:839px;height:1px;background:#dadada"></div><div style="left:32px;top:732px;width:22px;height:1px;background:#c8c8c8"></div><div style="left:55px;top:752px;width:839px;height:1px;background:#dadada"></div><div style="left:32px;top:752px;width:22px;height:1px;background:#c8c8c8"></div><div style="left:54px;top:253px;width:1px;height:504px;background:#c8c8c8"></div><div style="left:55px;top:272px;width:267px;height:1px;background:#000"></div><div style="left:55px;top:292px;width:267px;height:1px;background:#000"></div><div style="left:55px;top:312px;width:267px;height:1px;background:#000"></div><div style="left:55px;top:332px;width:267px;height:1px;background:#000"></div><div style="left:55px;top:352px;width:267px;height:1px;background:#000"></div><div style="left:55px;top:372px;width:267px;height:1px;background:#000"></div><div style="left:55px;top:392px;width:267px;height:1px;background:#000"></div><div style="left:55px;top:412px;width:267px;height:1px;background:#000"></div><div style="left:55px;top:432px;width:267px;height:1px;background:#000"></div><div style="left:55px;top:452px;width:267px;height:1px;background:#000"></div><div style="left:55px;top:472px;width:267px;height:1px;background:#000"></div><div style="left:55px;top:492px;width:267px;height:1px;background:#000"></div><div style="left:55px;top:512px;width:267px;height:1px;background:#000"></div><div style="left:55px;top:532px;width:267px;height:1px;background:#000"></div><div style="left:55px;top:552px;width:267px;height:1px;background:#000"></div><div style="left:55px;top:572px;width:267px;height:1px;background:#000"></div><div style="left:55px;top:592px;width:267px;height:1px;background:#000"></div><div style="left:55px;top:612px;width:267px;height:1px;background:#000"></div><div style="left:55px;top:632px;width:267px;height:1px;background:#000"></div><div style="left:55px;top:652px;width:267px;height:1px;background:#000"></div><div style="left:55px;top:672px;width:267px;height:1px;background:#000"></div><div style="left:55px;top:692px;width:267px;height:1px;background:#000"></div><div style="left:55px;top:712px;width:267px;height:1px;background:#000"></div><div style="left:55px;top:732px;width:267px;height:1px;background:#000"></div><div style="left:55px;top:752px;width:267px;height:1px;background:#000"></div><div style="left:149px;top:254px;width:1px;height:499px;background:#000"></div><div style="left:241px;top:254px;width:1px;height:499px;background:#000"></div><div style="left:322px;top:254px;width:1px;height:499px;background:#000"></div><div class="t" style="top:237.22px;font-size:12.5px;color:#222;left:-98.5px;width:400px;text-align:center;">A</div><div class="t" style="top:237.22px;font-size:12.5px;color:#222;left:-5px;width:400px;text-align:center;">B</div><div class="t" style="top:237.22px;font-size:12.5px;color:#222;left:81.5px;width:400px;text-align:center;">C</div><div class="t" style="top:237.22px;font-size:12.5px;color:#222;left:154px;width:400px;text-align:center;">D</div><div class="t" style="top:237.22px;font-size:12.5px;color:#222;left:265px;width:400px;text-align:center;">E</div><div class="t" style="top:237.22px;font-size:12.5px;color:#222;left:375px;width:400px;text-align:center;">F</div><div class="t" style="top:237.22px;font-size:12.5px;color:#222;left:439px;width:400px;text-align:center;">G</div><div class="t" style="top:237.22px;font-size:12.5px;color:#222;left:503px;width:400px;text-align:center;">H</div><div class="t" style="top:237.22px;font-size:12.5px;color:#222;left:567px;width:400px;text-align:center;">I</div><div class="t" style="top:237.22px;font-size:12.5px;color:#222;left:631px;width:400px;text-align:center;">J</div><div class="t" style="top:237.22px;font-size:12.5px;color:#222;left:696.5px;width:400px;text-align:center;">K</div><div class="t" style="top:257.82px;font-size:12.5px;color:#222;left:-158px;width:400px;text-align:center;">1</div><div class="t" style="top:257.23px;font-size:13.2px;color:#000;left:57.3px;">Месяц</div><div class="t" style="top:257.23px;font-size:13.2px;color:#000;left:152px;">Продано</div><div class="t" style="top:257.23px;font-size:13.2px;color:#000;left:244px;">Сумма</div><div class="t" style="top:277.82px;font-size:12.5px;color:#222;left:-158px;width:400px;text-align:center;">2</div><div class="t" style="top:277.23px;font-size:13.2px;color:#000;left:57.3px;">Январь</div><div class="t" style="top:297.82px;font-size:12.5px;color:#222;left:-158px;width:400px;text-align:center;">3</div><div class="t" style="top:297.23px;font-size:13.2px;color:#000;left:57.3px;">Февраль</div><div class="t" style="top:317.82px;font-size:12.5px;color:#222;left:-158px;width:400px;text-align:center;">4</div><div class="t" style="top:317.23px;font-size:13.2px;color:#000;left:57.3px;">Март</div><div class="t" style="top:337.82px;font-size:12.5px;color:#222;left:-158px;width:400px;text-align:center;">5</div><div class="t" style="top:337.23px;font-size:13.2px;color:#000;left:57.3px;">Апрель</div><div class="t" style="top:357.82px;font-size:12.5px;color:#222;left:-158px;width:400px;text-align:center;">6</div><div class="t" style="top:357.23px;font-size:13.2px;color:#000;left:57.3px;">Май</div><div class="t" style="top:377.82px;font-size:12.5px;color:#222;left:-158px;width:400px;text-align:center;">7</div><div class="t" style="top:377.23px;font-size:13.2px;color:#000;left:57.3px;">Июнь</div><div class="t" style="top:397.82px;font-size:12.5px;color:#222;left:-158px;width:400px;text-align:center;">8</div><div class="t" style="top:397.23px;font-size:13.2px;color:#000;left:57.3px;">Июль</div><div class="t" style="top:417.82px;font-size:12.5px;color:#222;left:-158px;width:400px;text-align:center;">9</div><div class="t" style="top:417.23px;font-size:13.2px;color:#000;left:57.3px;">Август</div><div class="t" style="top:437.82px;font-size:12.5px;color:#222;left:-158px;width:400px;text-align:center;">10</div><div class="t" style="top:437.23px;font-size:13.2px;color:#000;left:57.3px;">Сентябрь</div><div class="t" style="top:457.82px;font-size:12.5px;color:#222;left:-158px;width:400px;text-align:center;">11</div><div class="t" style="top:457.23px;font-size:13.2px;color:#000;left:57.3px;">Октябрь</div><div class="t" style="top:477.82px;font-size:12.5px;color:#222;left:-158px;width:400px;text-align:center;">12</div><div class="t" style="top:477.23px;font-size:13.2px;color:#000;left:57.3px;">Ноябрь</div><div class="t" style="top:497.82px;font-size:12.5px;color:#222;left:-158px;width:400px;text-align:center;">13</div><div class="t" style="top:497.23px;font-size:13.2px;color:#000;left:57.3px;">Декабрь</div><div class="t" style="top:517.82px;font-size:12.5px;color:#222;left:-158px;width:400px;text-align:center;">14</div><div class="t" style="top:517.23px;font-size:13.2px;color:#000;left:57.3px;">Январь</div><div class="t" style="top:537.82px;font-size:12.5px;color:#222;left:-158px;width:400px;text-align:center;">15</div><div class="t" style="top:537.23px;font-size:13.2px;color:#000;left:57.3px;">Февраль</div><div class="t" style="top:557.82px;font-size:12.5px;color:#222;left:-158px;width:400px;text-align:center;">16</div><div class="t" style="top:557.23px;font-size:13.2px;color:#000;left:57.3px;">Март</div><div class="t" style="top:577.82px;font-size:12.5px;color:#222;left:-158px;width:400px;text-align:center;">17</div><div class="t" style="top:577.23px;font-size:13.2px;color:#000;left:57.3px;">Апрель</div><div class="t" style="top:597.82px;font-size:12.5px;color:#222;left:-158px;width:400px;text-align:center;">18</div><div class="t" style="top:597.23px;font-size:13.2px;color:#000;left:57.3px;">Май</div><div class="t" style="top:617.82px;font-size:12.5px;color:#222;left:-158px;width:400px;text-align:center;">19</div><div class="t" style="top:617.23px;font-size:13.2px;color:#000;left:57.3px;">Июнь</div><div class="t" style="top:637.82px;font-size:12.5px;color:#222;left:-158px;width:400px;text-align:center;">20</div><div class="t" style="top:637.23px;font-size:13.2px;color:#000;left:57.3px;">Июль</div><div class="t" style="top:657.82px;font-size:12.5px;color:#222;left:-158px;width:400px;text-align:center;">21</div><div class="t" style="top:657.23px;font-size:13.2px;color:#000;left:57.3px;">Август</div><div class="t" style="top:677.82px;font-size:12.5px;color:#222;left:-158px;width:400px;text-align:center;">22</div><div class="t" style="top:677.23px;font-size:13.2px;color:#000;left:57.3px;">Сентябрь</div><div class="t" style="top:697.82px;font-size:12.5px;color:#222;left:-158px;width:400px;text-align:center;">23</div><div class="t" style="top:697.23px;font-size:13.2px;color:#000;left:57.3px;">Октябрь</div><div class="t" style="top:717.82px;font-size:12.5px;color:#222;left:-158px;width:400px;text-align:center;">24</div><div class="t" style="top:717.23px;font-size:13.2px;color:#000;left:57.3px;">Ноябрь</div><div class="t" style="top:737.82px;font-size:12.5px;color:#222;left:-158px;width:400px;text-align:center;">25</div><div class="t" style="top:737.23px;font-size:13.2px;color:#000;left:57.3px;">Декабрь</div><div class="t" style="top:497.23px;font-size:13.2px;color:#000;right:708.5px;">123</div><div class="t" style="top:497.23px;font-size:13.2px;color:#000;right:627.5px;">234524</div><div class="t" style="top:557.23px;font-size:13.2px;color:#000;right:708.5px;">345</div><div class="t" style="top:557.23px;font-size:13.2px;color:#000;right:627.5px;">45234</div><div class="t" style="top:637.23px;font-size:13.2px;color:#000;right:708.5px;">43</div><div class="t" style="top:637.23px;font-size:13.2px;color:#000;right:627.5px;">43543</div><div class="t" style="top:657.23px;font-size:13.2px;color:#000;right:708.5px;">5363</div><div class="t" style="top:657.23px;font-size:13.2px;color:#000;right:627.5px;">45234</div><div class="t" style="top:677.23px;font-size:13.2px;color:#000;right:708.5px;">324</div><div class="t" style="top:677.23px;font-size:13.2px;color:#000;right:627.5px;">543534</div><div class="t" style="top:697.23px;font-size:13.2px;color:#000;right:708.5px;">31</div><div class="t" style="top:697.23px;font-size:13.2px;color:#000;right:627.5px;">4524</div><div class="t" style="top:717.23px;font-size:13.2px;color:#000;right:708.5px;">78</div><div class="t" style="top:717.23px;font-size:13.2px;color:#000;right:627.5px;">531908</div><div class="t" style="top:737.23px;font-size:13.2px;color:#000;right:708.5px;">134</div><div class="t" style="top:737.23px;font-size:13.2px;color:#000;right:627.5px;">234524</div><div style="left:32px;top:757px;width:862px;height:1px;background:#c8c8c8"></div><div style="left:894px;top:233px;width:21px;height:525px;background:#e6e6e6"></div><div style="left:898px;top:235px;width:15px;height:15px;background:#fff;border:1px solid #c8c8c8;box-sizing:border-box"></div><svg style="left:901px;top:240px" width="9" height="5" viewBox="0 0 9 5"><path d="M0 5H9L4.5 0Z" fill="#6d6d6d"/></svg><div style="left:898px;top:250px;width:15px;height:473px;background:#fff;border:1px solid #c8c8c8;box-sizing:border-box"></div><div style="left:898px;top:743px;width:15px;height:15px;background:#fff;border:1px solid #c8c8c8;box-sizing:border-box"></div><svg style="left:901px;top:748px" width="9" height="5" viewBox="0 0 9 5"><path d="M0 0H9L4.5 5Z" fill="#6d6d6d"/></svg><div style="left:894px;top:233px;width:1px;height:525px;background:#bdbdbd"></div><div style="left:32px;top:758px;width:883px;height:27px;background:#e6e6e6"></div><svg style="left:55px;top:766px" width="5" height="9" viewBox="0 0 5 9"><path d="M5 0V9L0 4.5Z" fill="#c6c6c6"/></svg><svg style="left:84px;top:766px" width="5" height="9" viewBox="0 0 5 9"><path d="M0 0V9L5 4.5Z" fill="#c6c6c6"/></svg><div style="left:129px;top:757px;width:60px;height:25px;background:#fff;border-left:1px solid #c6c6c6;border-right:1px solid #c6c6c6;border-top:1px solid #c6c6c6;box-sizing:border-box"></div><div style="left:129px;top:780px;width:60px;height:2px;background:#217346"></div><div class="t" style="top:764.84px;font-size:12px;color:#217346;left:-41.5px;width:400px;text-align:center;font-weight:bold">Лист1</div><svg style="left:220px;top:761px" width="20" height="20" viewBox="220 761 20 20"><circle cx="229.9" cy="770.8" r="7.5" fill="none" stroke="#6d6d6d" stroke-width="1.1"/><path d="M229.9 766.6V775M225.7 770.8H234.1" stroke="#6d6d6d" stroke-width="1.9"/></svg><div style="left:561px;top:766px;width:2px;height:2px;background:#a0a0a0"></div><div style="left:561px;top:770px;width:2px;height:2px;background:#a0a0a0"></div><div style="left:561px;top:774px;width:2px;height:2px;background:#a0a0a0"></div><div style="left:579px;top:764px;width:316px;height:15px;background:#d6d6d6;border:1px solid #c8c8c8;box-sizing:border-box"></div><div style="left:579px;top:764px;width:14px;height:15px;background:#fff;border:1px solid #c8c8c8;box-sizing:border-box"></div><svg style="left:583px;top:767px" width="5" height="9" viewBox="0 0 5 9"><path d="M5 0V9L0 4.5Z" fill="#6d6d6d"/></svg><div style="left:592px;top:764px;width:259px;height:15px;background:#fff;border:1px solid #c8c8c8;box-sizing:border-box"></div><div style="left:880px;top:764px;width:15px;height:15px;background:#fff;border:1px solid #c8c8c8;box-sizing:border-box"></div><svg style="left:886px;top:767px" width="5" height="9" viewBox="0 0 5 9"><path d="M0 0V9L5 4.5Z" fill="#6d6d6d"/></svg><div style="left:32px;top:785px;width:883px;height:23px;background:#f3f3f3"></div><div style="left:32px;top:785px;width:883px;height:1px;background:#d4d4d4"></div><div style="left:32px;top:807px;width:883px;height:1px;background:#9c9c9c"></div><div style="left:32px;top:808px;width:883px;height:1px;background:#d8d8d8"></div><div class="t" style="top:790.63px;font-size:11.3px;color:#444;left:37.5px;">Готово</div><svg style="left:92px;top:787px" width="18" height="17" viewBox="92 787 18 17"><circle cx="97.8" cy="791.9" r="2.8" fill="#616161"/><rect x="102.1" y="790" width="5.7" height="2.7" fill="#616161"/><path d="M96.7 795.8V801.2H107.3V790.5" fill="none" stroke="#616161" stroke-width="1.1"/><path d="M101 795.4H102.7M103.9 795.4H105.6M98 797.5H99.7M101 797.5H102.7M103.9 797.5H105.6M98 799.5H99.7M101 799.5H102.7M103.9 799.5H105.6" stroke="#616161" stroke-width="1"/></svg><div class="t" style="top:790.89px;font-size:11px;color:#444;left:273.5px;">Среднее: 83,8445</div><div class="t" style="top:790.55px;font-size:11.4px;color:#444;left:403px;">Количество: 12</div><div class="t" style="top:791.06px;font-size:10.8px;color:#444;left:499px;">Сумма: 1006,134</div><div style="left:602px;top:786px;width:40px;height:21px;background:#c8c8c8"></div><svg style="left:612px;top:787px" width="100" height="18" viewBox="612 787 100 18"><rect x="615.6" y="789.6" width="11.9" height="11.9" fill="none" stroke="#666" stroke-width="1.1"/><path d="M619.6 789.6V801.5M623.5 789.6V801.5M615.6 793.6H627.5M615.6 797.5H627.5" stroke="#666" stroke-width="1.1"/><rect x="655.6" y="789.6" width="12.8" height="11.9" fill="none" stroke="#666" stroke-width="1.1"/><rect x="658.6" y="791.6" width="6.8" height="7.9" fill="none" stroke="#666" stroke-width="1"/><path d="M659.8 793.6H664.2M659.8 795.6H664.2M659.8 797.6H664.2" stroke="#666" stroke-width="0.9"/><rect x="695.6" y="789.6" width="12.8" height="11.9" fill="none" stroke="#666" stroke-width="1.1"/><path d="M699.8 789.6V796.2H695.6M703.7 789.6V796.2H699.8" fill="none" stroke="#666" stroke-width="1.1"/></svg><div style="left:728px;top:796px;width:8px;height:1px;background:#555"></div><div style="left:742px;top:796px;width:99px;height:1px;background:#b0b0b0"></div><div style="left:789px;top:791px;width:5px;height:11px;background:#5a5a5a"></div><div style="left:846px;top:796px;width:8px;height:1px;background:#555"></div><div style="left:849.5px;top:792px;width:1px;height:8.5px;background:#555"></div><div class="t" style="top:791.40px;font-size:10.4px;color:#444;left:867.5px;">100 %</div><div style="left:914px;top:94px;width:1px;height:714px;background:#c6c6c6"></div><div style="left:224px;top:216px;width:513px;height:413px;background:#f0f0f0;box-shadow:0 2px 12px rgba(0,0,0,0.28)"></div><div style="left:224px;top:216px;width:513px;height:413px;background:#f0f0f0;border:1px solid #a4a4a4;box-sizing:border-box"></div><div style="left:225px;top:217px;width:511px;height:30px;background:#fff"></div><div class="t" style="top:225.84px;font-size:11.77px;color:#9a9a9a;left:233.5px;">Мастер распределения текста по столбцам — шаг 1 из 3</div><div class="t" style="top:225.42px;font-size:12.5px;color:#8a8a8a;left:664.5px;">?</div><svg style="left:708px;top:226px" width="11" height="11" viewBox="0 0 11 11"><path d="M0.5 0.5L10.5 10.5M10.5 0.5L0.5 10.5" stroke="#6a6a6a" stroke-width="1.05"/></svg><div class="t" style="top:255.78px;font-size:11.6px;color:#000;left:231.5px;">Данные восприняты как список значений с разделителями.</div><div class="t" style="top:275.78px;font-size:11.6px;color:#000;left:231.5px;">Если это верно, нажмите кнопку &#39;&#39;Далее &gt;&#8202;&#39;&#39;, в противном случае укажите формат данных.</div><div style="left:232px;top:303px;width:497px;height:69px;border:1px solid #dcdcdc;box-sizing:border-box"></div><div class="t" style="left:234px;top:297px;font-size:11.6px;line-height:11.6px;background:#f0f0f0;padding:0 2px;">Формат исходных данных</div><div class="t" style="top:316.48px;font-size:11.6px;color:#000;left:240.7px;">Укажите формат данных:</div><svg style="left:257px;top:333px" width="14" height="14" viewBox="0 0 14 14"><circle cx="7" cy="7" r="6" fill="#fff" stroke="#333" stroke-width="1"/><circle cx="7" cy="7" r="3.5" fill="#222"/></svg><svg style="left:257px;top:352.5px" width="14" height="14" viewBox="0 0 14 14"><circle cx="7" cy="7" r="6" fill="#fff" stroke="#333" stroke-width="1"/></svg><div class="t" style="top:334.18px;font-size:11.6px;color:#000;left:275.6px;">с <u>р</u>азделителями</div><div class="t" style="top:353.68px;font-size:11.6px;color:#000;left:275.6px;">фиксированной <u>ш</u>ирины</div><div class="t" style="top:334.18px;font-size:11.6px;color:#000;left:423px;">— значения полей отделяются знаками-разделителями</div><div class="t" style="top:353.68px;font-size:11.6px;color:#000;left:423.6px;">— поля имеют заданную ширину</div><svg style="left:238px;top:314px" width="212" height="52" viewBox="238 314 212 52"><defs><filter id="rs" x="-20%" y="-50%" width="140%" height="200%"><feGaussianBlur stdDeviation="1.3"/></filter></defs><rect x="248" y="324.5" width="190" height="31" rx="9" ry="9" fill="none" stroke="rgba(0,0,0,0.45)" stroke-width="3.5" filter="url(#rs)"/><rect x="247.3" y="323.4" width="190.4" height="30.2" rx="8.5" ry="8.5" fill="none" stroke="#ec1c24" stroke-width="3.6"/></svg><div class="t" style="top:462.98px;font-size:11.6px;color:#000;left:240.7px;">Предварительный просмотр выбранных данных:</div><div style="left:240px;top:487px;width:465px;height:76px;border-left:1px solid #000;border-top:1px solid #000;border-right:1px solid #000;box-sizing:border-box"></div><div style="left:240px;top:562px;width:465px;height:1px;background:#fff"></div><div style="left:254px;top:488px;width:1px;height:74px;background:#000"></div><div style="left:241px;top:488.8px;width:13px;height:14.2px;border-bottom:1px solid #000;box-sizing:border-box"></div><div class="t" style="left:243px;top:491.3px;font-family:'Liberation Mono',monospace;font-size:11.3px;line-height:12px;color:#111">2</div><div class="t" style="left:254.5px;top:491.3px;font-family:'Liberation Mono',monospace;font-size:11.3px;line-height:12px;color:#111">54,234</div><div style="left:241px;top:503.0px;width:13px;height:14.2px;border-bottom:1px solid #000;box-sizing:border-box"></div><div class="t" style="left:243px;top:505.5px;font-family:'Liberation Mono',monospace;font-size:11.3px;line-height:12px;color:#111">3</div><div class="t" style="left:254.5px;top:505.5px;font-family:'Liberation Mono',monospace;font-size:11.3px;line-height:12px;color:#111">76,345</div><div style="left:241px;top:517.2px;width:13px;height:14.2px;border-bottom:1px solid #000;box-sizing:border-box"></div><div class="t" style="left:243px;top:519.7px;font-family:'Liberation Mono',monospace;font-size:11.3px;line-height:12px;color:#111">4</div><div class="t" style="left:254.5px;top:519.7px;font-family:'Liberation Mono',monospace;font-size:11.3px;line-height:12px;color:#111">45,234</div><div style="left:241px;top:531.4px;width:13px;height:14.2px;border-bottom:1px solid #000;box-sizing:border-box"></div><div class="t" style="left:243px;top:533.9px;font-family:'Liberation Mono',monospace;font-size:11.3px;line-height:12px;color:#111">5</div><div class="t" style="left:254.5px;top:533.9px;font-family:'Liberation Mono',monospace;font-size:11.3px;line-height:12px;color:#111">65,656</div><div style="left:241px;top:545.6px;width:13px;height:14.2px;border-bottom:1px solid #000;box-sizing:border-box"></div><div class="t" style="left:243px;top:548.1px;font-family:'Liberation Mono',monospace;font-size:11.3px;line-height:12px;color:#111">6</div><div class="t" style="left:254.5px;top:548.1px;font-family:'Liberation Mono',monospace;font-size:11.3px;line-height:12px;color:#111">4,523</div><svg style="left:708px;top:492px" width="9" height="6" viewBox="0 0 9 6"><path d="M0.5 5.5L4.5 1.5L8.5 5.5" stroke="#555" stroke-width="1.9" fill="none"/></svg><div style="left:705px;top:504px;width:15px;height:17px;background:#cdcdcd"></div><svg style="left:708px;top:551px" width="9" height="6" viewBox="0 0 9 6"><path d="M0.5 0.5L4.5 4.5L8.5 0.5" stroke="#555" stroke-width="1.9" fill="none"/></svg><svg style="left:245px;top:568px" width="6" height="8" viewBox="0 0 6 8"><path d="M5 0.5L1.5 4L5 7.5" stroke="#b0b0b0" stroke-width="1.8" fill="none"/></svg><svg style="left:693px;top:568px" width="6" height="8" viewBox="0 0 6 8"><path d="M1 0.5L4.5 4L1 7.5" stroke="#b0b0b0" stroke-width="1.8" fill="none"/></svg><div style="left:403px;top:598px;width:74px;height:22px;background:#e1e1e1;border:1px solid #adadad;box-sizing:border-box"></div><div class="t" style="top:602.98px;font-size:11.6px;color:#000;left:240.0px;width:400px;text-align:center;">Отмена</div><div style="left:487px;top:598px;width:74px;height:22px;background:#e1e1e1;border:1px solid #adadad;box-sizing:border-box"></div><div class="t" style="top:602.98px;font-size:11.6px;color:#838383;left:324.0px;width:400px;text-align:center;">&lt; Назад</div><div style="left:571px;top:598px;width:74px;height:22px;background:#e1e1e1;border:2px solid #0078d7;box-sizing:border-box"></div><div class="t" style="top:602.98px;font-size:11.6px;color:#000;left:408.0px;width:400px;text-align:center;">Да<u>л</u>ее &gt;</div><div style="left:655px;top:598px;width:74px;height:22px;background:#e1e1e1;border:1px solid #adadad;box-sizing:border-box"></div><div class="t" style="top:602.98px;font-size:11.6px;color:#000;left:492.0px;width:400px;text-align:center;"><u>Г</u>отово</div>
</div></body></html>
